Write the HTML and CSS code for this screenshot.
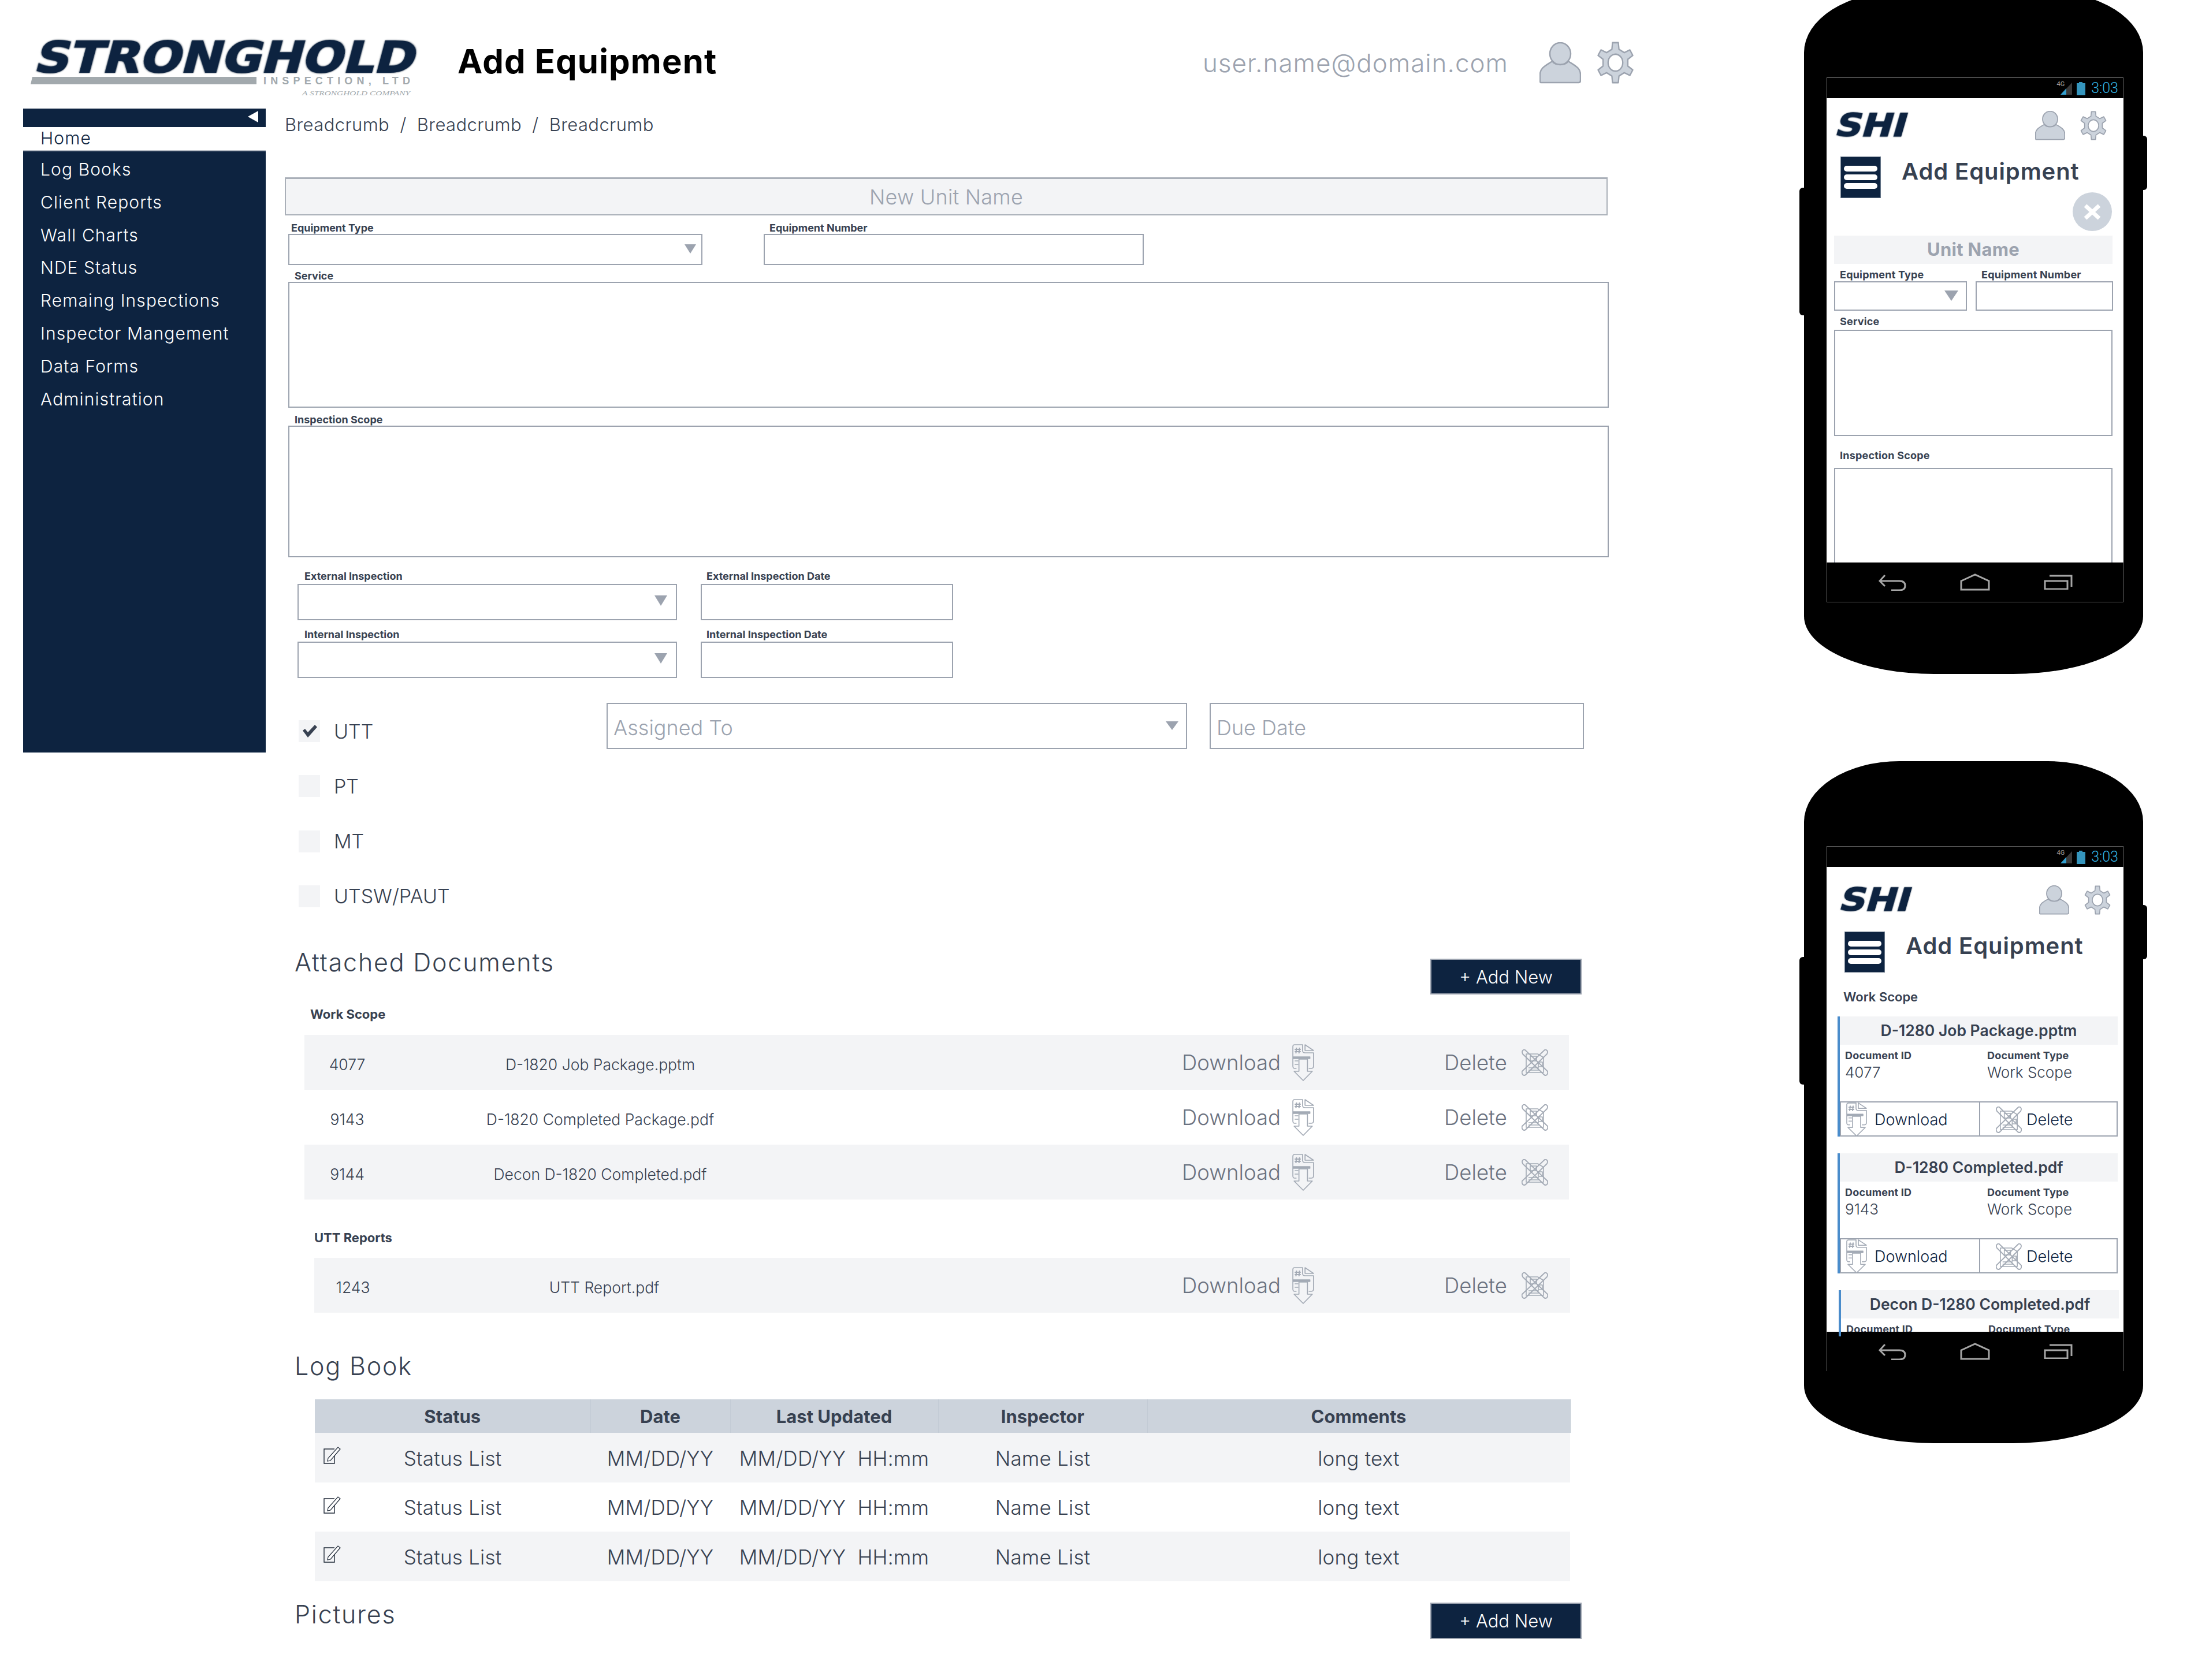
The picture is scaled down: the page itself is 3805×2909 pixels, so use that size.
FILE: index.html
```html
<!DOCTYPE html>
<html lang="en">
<head>
<meta charset="utf-8">
<title>Add Equipment</title>
<link rel="stylesheet" href="styles.css">
</head>
<body>
<svg class="defs" aria-hidden="true">
  <symbol id="i-user" viewBox="0 0 72 72" preserveAspectRatio="none">
    <ellipse cx="36" cy="20" rx="18" ry="19" fill="#ccd3dc" stroke="#9ca3af" stroke-width="2.5"/>
    <path d="M2 70 Q1 70 1 66 V56 C1 44 12 40 22 33 C28 41 44 41 50 33 C60 40 71 44 71 56 V66 Q71 70 68 70 Z" fill="#ccd3dc" stroke="#9ca3af" stroke-width="2.5"/>
  </symbol>
  <symbol id="i-gear" viewBox="0 0 100 100" preserveAspectRatio="none">
    <path fill-rule="evenodd" fill="#ccd3dc" stroke="#9ca3af" stroke-width="3.5" stroke-linejoin="round" d="M40.9 18.3L42.5 2.6H57.5L59.1 18.3L72.9 26.3L87.3 19.8L94.8 32.8L82 42V58L94.8 67.2L87.3 80.2L72.9 73.7L59.1 81.7L57.5 97.4H42.5L40.9 81.7L27.1 73.7L12.7 80.2L5.2 67.2L18 58V42L5.2 32.8L12.7 19.8L27.1 26.3Z"/>
    <ellipse cx="50" cy="50" rx="19" ry="20" fill="#fff" stroke="#9ca3af" stroke-width="3.5"/>
  </symbol>
  <symbol id="i-download" viewBox="0 0 38 64" preserveAspectRatio="none">
    <g fill="none" stroke="#a3aab5" stroke-width="1.6" stroke-linejoin="round">
      <path d="M8 42H5Q2 42 2 38V4Q2 1 5 1H18V11Q18 15 22 15H36V38Q36 42 32 42H28"/>
      <path d="M22 1L36 11H22Z"/>
      <path d="M3 22H30V25H3Z" fill="#a3aab5"/>
      <path d="M5 29H11M5 35H11"/>
      <path d="M12 26H26V47H34L19 63L4 47H12Z"/>
      <path d="M8 6L7 16M13 6L12 16M5 9H15M5 13H15" stroke-width="2"/>
    </g>
  </symbol>
  <symbol id="i-delete" viewBox="0 0 46 46" preserveAspectRatio="none">
    <g fill="none" stroke="#a3aab5" stroke-width="1.6" stroke-linejoin="round">
      <path d="M8 8H28L38 14V40H8Z"/>
      <path d="M15 12H26V20H15ZM29 22H36V30H29ZM12 32H30M12 36H30"/>
      <path d="M6 1L45 38Q46 41 44 44Q41 46 39 44L2 8Q0 4 2 2Q4 0 6 1Z" stroke-width="1.8"/>
      <path d="M40 1L1 38Q0 41 2 44Q5 46 7 44L44 8Q46 4 44 2Q42 0 40 1Z" stroke-width="1.8"/>
    </g>
  </symbol>
  <symbol id="i-edit" viewBox="0 0 30 30">
    <path d="M19 4H1V29H19V15" fill="none" stroke="#1f2937" stroke-width="1.4"/>
    <path d="M25 1L29 4L12 24L7 25L8 20Z" fill="#fff" stroke="#1f2937" stroke-width="1.2"/>
  </symbol>
  <symbol id="i-back" viewBox="0 0 48 28">
    <path d="M11 1L2 11L11 20M2 11H36Q46 11 46 19T36 27H22" fill="none" stroke="#a6a6a6" stroke-width="3"/>
  </symbol>
  <symbol id="i-home" viewBox="0 0 52 30">
    <path d="M2 13L26 2L50 13V28H2Z" fill="none" stroke="#a6a6a6" stroke-width="3"/>
  </symbol>
  <symbol id="i-recent" viewBox="0 0 50 26">
    <path d="M2 11H41V25H2Z" fill="none" stroke="#a6a6a6" stroke-width="3"/>
    <path d="M10 2H48V21" fill="none" stroke="#a6a6a6" stroke-width="3"/>
  </symbol>
  <symbol id="i-status" viewBox="0 0 50 24">
    <path d="M6 23L26 2V23Z" fill="#3a3a3a"/>
    <path d="M6 23L16 12V23Z" fill="#33a0d0"/>
    <path d="M34 3H38V1H44V3H49V24H34Z" fill="#3595bd"/>
  </symbol>
</svg>

<div class="board">
  <div class="desktop">
    <header class="top">
      <svg class="logo" viewBox="0 0 672 96" role="img" aria-label="Stronghold Inspection, LTD">
        <text class="logo-main" x="19" y="55" textLength="658" lengthAdjust="spacingAndGlyphs" transform="skewX(-15)">STRONGHOLD</text>
        <path class="logo-bar" d="M3 63H391V76H0Z"/>
        <text class="logo-sub" x="403" y="76" textLength="254">INSPECTION, LTD</text>
        <text class="logo-tag" x="470" y="95" textLength="187" lengthAdjust="spacingAndGlyphs">A STRONGHOLD COMPANY</text>
      </svg>
      <h1 class="page-title">Add Equipment</h1>
      <span class="user-mail">user.name@domain.com</span>
      <svg class="ico-user"><use href="#i-user"/></svg>
      <svg class="ico-gear"><use href="#i-gear"/></svg>
    </header>

    <div class="layout">
      <nav class="side">
        <div class="side-top"><span class="side-arrow"></span></div>
        <a class="side-home">Home</a>
        <a class="side-link">Log Books</a>
        <a class="side-link">Client Reports</a>
        <a class="side-link">Wall Charts</a>
        <a class="side-link">NDE Status</a>
        <a class="side-link">Remaing Inspections</a>
        <a class="side-link">Inspector Mangement</a>
        <a class="side-link">Data Forms</a>
        <a class="side-link">Administration</a>
      </nav>

      <main class="content">
        <div class="crumbs">Breadcrumb&nbsp; / &nbsp;Breadcrumb&nbsp; / &nbsp;Breadcrumb</div>
        <div class="unit-bar">New Unit Name</div>

        <div class="row row-1">
          <div class="field f-type"><label class="lbl lbl-a">Equipment Type</label><div class="box select h54"></div></div>
          <div class="field f-num"><label class="lbl lbl-b">Equipment Number</label><div class="box h54"></div></div>
        </div>

        <div class="wide wide-service">
          <label class="lbl lbl-w">Service</label>
          <div class="box h218"></div>
        </div>
        <div class="wide wide-scope">
          <label class="lbl lbl-w">Inspection Scope</label>
          <div class="box h228"></div>
        </div>

        <div class="row row-ext">
          <div class="field f-insp"><label class="lbl lbl-w">External Inspection</label><div class="box select h63"></div></div>
          <div class="field f-date"><label class="lbl lbl-b">External Inspection Date</label><div class="box h63"></div></div>
        </div>
        <div class="row row-int">
          <div class="field f-insp"><label class="lbl lbl-w">Internal Inspection</label><div class="box select h63"></div></div>
          <div class="field f-date"><label class="lbl lbl-b">Internal Inspection Date</label><div class="box h63"></div></div>
        </div>

        <div class="assign">
          <ul class="checks">
            <li class="check"><span class="cb"><svg class="tick" viewBox="0 0 28 24"><path d="M2 11L6 8L11 14L23 1L27 5L11 23Z"/></svg></span>UTT</li>
            <li class="check"><span class="cb"></span>PT</li>
            <li class="check"><span class="cb"></span>MT</li>
            <li class="check"><span class="cb"></span>UTSW/PAUT</li>
          </ul>
          <div class="box select h80 ph ph-assigned">Assigned To</div>
          <div class="box h80 ph ph-due">Due Date</div>
        </div>

        <div class="sec-head sec-docs">
          <h2 class="sec-title">Attached Documents</h2>
          <button class="add-btn">+ Add New</button>
        </div>

        <div class="group-lbl gl-work">Work Scope</div>
        <div class="docs">
          <div class="doc alt"><span class="doc-id">4077</span><span class="doc-name">D-1820 Job Package.pptm</span><span class="act act-dl">Download<svg class="ico-dl"><use href="#i-download"/></svg></span><span class="act act-del">Delete<svg class="ico-del"><use href="#i-delete"/></svg></span></div>
          <div class="doc"><span class="doc-id">9143</span><span class="doc-name">D-1820 Completed Package.pdf</span><span class="act act-dl">Download<svg class="ico-dl"><use href="#i-download"/></svg></span><span class="act act-del">Delete<svg class="ico-del"><use href="#i-delete"/></svg></span></div>
          <div class="doc alt"><span class="doc-id">9144</span><span class="doc-name">Decon D-1820 Completed.pdf</span><span class="act act-dl">Download<svg class="ico-dl"><use href="#i-download"/></svg></span><span class="act act-del">Delete<svg class="ico-del"><use href="#i-delete"/></svg></span></div>
        </div>

        <div class="group-lbl gl-utt">UTT Reports</div>
        <div class="docs docs-utt">
          <div class="doc doc-utt alt"><span class="doc-id">1243</span><span class="doc-name">UTT Report.pdf</span><span class="act act-dl">Download<svg class="ico-dl"><use href="#i-download"/></svg></span><span class="act act-del">Delete<svg class="ico-del"><use href="#i-delete"/></svg></span></div>
        </div>

        <h2 class="sec-title sec-log">Log Book</h2>
        <table class="log">
          <colgroup><col class="c-status"><col class="c-date"><col class="c-upd"><col class="c-insp"><col class="c-com"></colgroup>
          <thead><tr><th>Status</th><th>Date</th><th>Last Updated</th><th>Inspector</th><th>Comments</th></tr></thead>
          <tbody>
            <tr class="alt"><td class="st"><svg class="ico-edit"><use href="#i-edit"/></svg>Status List</td><td>MM/DD/YY</td><td>MM/DD/YY&nbsp; HH:mm</td><td>Name List</td><td>long text</td></tr>
            <tr><td class="st"><svg class="ico-edit"><use href="#i-edit"/></svg>Status List</td><td>MM/DD/YY</td><td>MM/DD/YY&nbsp; HH:mm</td><td>Name List</td><td>long text</td></tr>
            <tr class="alt"><td class="st"><svg class="ico-edit"><use href="#i-edit"/></svg>Status List</td><td>MM/DD/YY</td><td>MM/DD/YY&nbsp; HH:mm</td><td>Name List</td><td>long text</td></tr>
          </tbody>
        </table>

        <div class="sec-head sec-pics">
          <h2 class="sec-title">Pictures</h2>
          <button class="add-btn">+ Add New</button>
        </div>
      </main>
    </div>
  </div>

  <div class="phones">
    <section class="phone phone-a">
      <span class="key key-r"></span><span class="key key-l"></span>
      <div class="screen">
        <div class="status"><span class="tiny">4G</span><svg class="st-icons"><use href="#i-status"/></svg><span class="clock">3:03</span></div>
        <div class="view">
          <div class="m-top">
            <svg class="shi" viewBox="0 0 132 46" role="img" aria-label="SHI"><text x="13" y="44" textLength="122" lengthAdjust="spacingAndGlyphs" transform="skewX(-16)">SHI</text></svg>
            <svg class="m-user"><use href="#i-user"/></svg>
            <svg class="m-gear"><use href="#i-gear"/></svg>
          </div>
          <div class="m-title"><span class="burger"><i></i><i></i><i></i></span><h2 class="m-h">Add Equipment</h2></div>
          <span class="m-close"><svg viewBox="0 0 30 34" class="m-x"><path d="M3 6L27 28M27 6L3 28"/></svg></span>
          <div class="m-unit">Unit Name</div>
          <div class="m-two">
            <div class="field"><label class="m-lbl m-lbl-1">Equipment Type</label><div class="box select h51 arrow-big"></div></div>
            <div class="field"><label class="m-lbl m-lbl-1">Equipment Number</label><div class="box h51"></div></div>
          </div>
          <label class="m-lbl m-lbl-s">Service</label>
          <div class="box m-area h184"></div>
          <label class="m-lbl m-lbl-i">Inspection Scope</label>
          <div class="box m-area h200"></div>
        </div>
        <div class="softkeys"><svg class="k-back"><use href="#i-back"/></svg><svg class="k-home"><use href="#i-home"/></svg><svg class="k-recent"><use href="#i-recent"/></svg></div>
      </div>
    </section>

    <section class="phone phone-b">
      <span class="key key-r"></span><span class="key key-l"></span>
      <div class="screen screen-b">
        <div class="status"><span class="tiny">4G</span><svg class="st-icons"><use href="#i-status"/></svg><span class="clock">3:03</span></div>
        <div class="view view-b">
          <div class="m-top">
            <svg class="shi" viewBox="0 0 132 46" role="img" aria-label="SHI"><text x="13" y="44" textLength="122" lengthAdjust="spacingAndGlyphs" transform="skewX(-16)">SHI</text></svg>
            <svg class="m-user"><use href="#i-user"/></svg>
            <svg class="m-gear"><use href="#i-gear"/></svg>
          </div>
          <div class="m-title"><span class="burger"><i></i><i></i><i></i></span><h2 class="m-h">Add Equipment</h2></div>
          <div class="m-group">Work Scope</div>

          <article class="card">
            <h3 class="card-h">D-1280 Job Package.pptm</h3>
            <div class="card-grid"><b>Document ID</b><b>Document Type</b><span>4077</span><span>Work Scope</span></div>
            <div class="card-acts"><span class="cact"><svg class="c-dl"><use href="#i-download"/></svg>Download</span><span class="cact cact-del"><svg class="c-del"><use href="#i-delete"/></svg>Delete</span></div>
          </article>
          <article class="card">
            <h3 class="card-h">D-1280 Completed.pdf</h3>
            <div class="card-grid"><b>Document ID</b><b>Document Type</b><span>9143</span><span>Work Scope</span></div>
            <div class="card-acts"><span class="cact"><svg class="c-dl"><use href="#i-download"/></svg>Download</span><span class="cact cact-del"><svg class="c-del"><use href="#i-delete"/></svg>Delete</span></div>
          </article>
          <article class="card card-last">
            <h3 class="card-h">Decon D-1280 Completed.pdf</h3>
            <div class="card-grid"><b>Document ID</b><b>Document Type</b></div>
          </article>
        </div>
        <div class="softkeys softkeys-b"><svg class="k-back"><use href="#i-back"/></svg><svg class="k-home"><use href="#i-home"/></svg><svg class="k-recent"><use href="#i-recent"/></svg></div>
      </div>
    </section>
  </div>
</div>
</body>
</html>
```

FILE: styles.css
```css
* { box-sizing: border-box; }
html, body { margin: 0; padding: 0; background: #fff; }
body { font-family: Inter, "Open Sans", sans-serif; font-weight: 300; color: #374151; }
h1, h2, h3, ul { margin: 0; padding: 0; }
.defs { position: absolute; width: 0; height: 0; }
.board { display: flex; width: 3805px; height: 2909px; overflow: hidden; }
.desktop { width: 3123px; flex: none; }

/* header */
.top { display: flex; align-items: flex-start; height: 188px; padding: 70px 293px 0 53px; }
.logo { width: 672px; height: 96px; flex: none; overflow: visible; }
.logo-main { font: 700 74px "DejaVu Sans", sans-serif; fill: #0d2340; stroke: #0d2340; stroke-width: 2px; filter: drop-shadow(0 0 1px #8f979f) drop-shadow(0 0 1px #8f979f); }
.logo-bar { fill: #a2a9ad; }
.logo-sub { font: 700 18px "Liberation Sans", sans-serif; fill: #a2a9ad; }
.logo-tag { font: italic 400 11px "Liberation Serif", serif; fill: #a2a9ad; }
.page-title { margin: 6px 0 0 67px; font-size: 58px; line-height: 60px; font-weight: 700; letter-spacing: 1.2px; color: #000; white-space: nowrap; }
.user-mail { margin: 9px 0 0 auto; font-size: 44px; line-height: 60px; letter-spacing: 1px; color: #9ca3af; }
.ico-user { width: 72px; height: 72px; margin: 3px 0 0 54px; flex: none; }
.ico-gear { width: 67px; height: 73px; margin: 2px 0 0 26px; flex: none; }

/* layout + sidebar */
.layout { display: flex; align-items: flex-start; padding-left: 40px; }
.side { width: 420px; height: 1115px; background: #0d2340; flex: none; display: flex; flex-direction: column; color: #fff; }
.side-top { height: 32px; display: flex; justify-content: flex-end; padding: 4px 13px 0 0; }
.side-arrow { width: 0; height: 0; border-style: solid; border-width: 10px 18px 10px 0; border-color: transparent #fff transparent transparent; }
.side-home { height: 42px; line-height: 38px; padding-left: 30px; background: #fff; color: #0d2340; border-bottom: 2px solid #b8bec7; font-size: 30px; letter-spacing: 1.1px; margin-bottom: 3px; }
.side-link { height: 56.8px; line-height: 56px; padding-left: 30px; font-size: 30px; letter-spacing: 1.1px; white-space: nowrap; }

/* form */
.content { margin-left: 33px; width: 2300px; flex: none; }
.crumbs { height: 119px; padding-top: 8px; line-height: 40px; font-size: 31px; letter-spacing: .4px; white-space: nowrap; }
.unit-bar { width: 2290px; height: 66px; background: #f3f4f6; border: 2px solid #a9afb8; border-top-width: 3px; line-height: 63px; text-align: center; font-size: 36px; letter-spacing: .2px; color: #9ca3af; }
.field { display: flex; flex-direction: column; }
.row { display: flex; }
.box { border: 2px solid #9ca3af; background: #fff; }
.select { position: relative; }
.select::after { content: ""; position: absolute; right: 9px; top: 16px; border-style: solid; border-width: 16px 10px 0; border-color: #9ca3af transparent transparent; }
.f-insp .select::after { right: 15px; top: 18px; border-width: 18px 11px 0; }
.lbl { display: block; height: 21px; line-height: 22px; font-size: 18px; font-weight: 700; color: #374151; white-space: nowrap; }
.lbl-a { padding-left: 5px; }
.lbl-b { padding-left: 10px; }
.lbl-w { padding-left: 11px; }
.h54 { height: 54px; }
.h63 { height: 63px; }
.h80 { height: 80px; }
.h218 { height: 218px; }
.h228 { height: 228px; }
.h51 { height: 51px; }
.h184 { height: 184px; }
.h200 { height: 200px; }
.row-1 { margin: 11px 0 0 6px; }
.f-type { width: 717px; }
.f-num { width: 658px; margin-left: 106px; }
.wide { margin-left: 6px; width: 2286px; }
.wide-service { margin-top: 8px; }
.wide-scope { margin-top: 10px; }
.row-ext { margin: 22px 0 0 22px; }
.row-int { margin: 14px 0 0 22px; }
.row-ext .lbl { height: 24px; }
.row-int .lbl { height: 23px; }
.row-ext .lbl-w, .row-int .lbl-w { padding-left: 12px; }
.f-insp { width: 657px; }
.f-date { width: 437px; margin-left: 41px; }
.assign { display: flex; align-items: flex-start; margin-top: 43px; height: 353px; }
.checks { list-style: none; width: 533px; margin: 30px 0 0 24px; flex: none; }
.check { display: flex; align-items: center; height: 38px; margin-bottom: 57.3px; font-size: 34px; }
.cb { width: 37px; height: 38px; background: #f3f4f6; margin-right: 24px; display: flex; align-items: center; justify-content: center; flex: none; }
.tick { width: 28px; height: 24px; fill: #374151; }
.ph { font-size: 36px; line-height: 82px; padding-left: 10px; color: #9ca3af; }
.ph-assigned { width: 1005px; }
.ph-assigned::after { right: 13px; top: 30px; border-width: 15px 11px 0; }
.ph-due { width: 648px; margin-left: 39px; }
.sec-head { display: flex; justify-content: space-between; align-items: flex-start; width: 2245px; }
.sec-docs { margin-top: 69px; height: 83px; }
.sec-title { font-size: 43px; line-height: 54px; font-weight: 300; letter-spacing: 1.8px; margin-left: 17px; white-space: nowrap; }
.add-btn { width: 262px; height: 62px; margin-top: 21px; background: #0d2340; border: 2px solid #9ca3af; color: #fff; font: 300 31px Inter, sans-serif; padding: 0; }
.sec-pics { margin-top: 30px; }
.sec-pics .add-btn { margin-top: 7px; height: 63px; }
.group-lbl { font-size: 22px; line-height: 28px; font-weight: 700; white-space: nowrap; }
.gl-work { margin: 20px 0 0 44px; }
.gl-utt { margin: 52px 0 0 51px; }
.docs { width: 2189px; margin: 22px 0 0 34px; }
.docs-utt { width: 2174px; margin: 21px 0 0 51px; }
.doc { display: grid; grid-template-columns: 148px 728px 1097px 1fr; height: 95px; align-items: center; font-size: 26.5px; }
.doc-utt { grid-template-columns: 134px 736px 1086px 1fr; }
.act-dl { padding-left: 643px; }
.doc-utt .act-dl { padding-left: 632px; }
.alt { background: #f3f4f6; }
.doc-id, .doc-name { text-align: center; white-space: nowrap; padding-top: 7px; }
.act { display: flex; align-items: center; font-size: 36.5px; color: #6b7280; white-space: nowrap; }
.ico-dl { width: 40px; height: 64px; margin-left: 19px; flex: none; }
.ico-del { width: 46px; height: 46px; margin-left: 25px; flex: none; }
.sec-log { margin-top: 65px; }
.log { table-layout: fixed; border-collapse: collapse; width: 2173px; margin: 31px 0 0 52px; }
.c-status { width: 477px; } .c-date { width: 242px; } .c-upd { width: 360px; } .c-insp { width: 362px; } .c-com { width: 732px; }
.log th { height: 58px; background: #ccd3dc; font-size: 31px; font-weight: 700; padding: 0; border-right: 1px solid #c3cbd5; }
.log td { height: 85.6px; padding: 2px 0 0; text-align: center; font-size: 35px; letter-spacing: .2px; white-space: nowrap; }
.st { position: relative; }
.ico-edit { position: absolute; left: 15px; top: 24px; width: 30px; height: 30px; }

/* phones */
.phones { display: flex; flex-direction: column; gap: 151px; margin-top: -14px; width: 595px; flex: none; }
.phone { position: relative; width: 587px; height: 1181px; flex: none; padding: 148px 0 0 39px; background: #000; border-radius: 165px 165px 225px 225px / 105px 105px 100px 100px; }
.phone-b { padding-top: 147px; }
.key { position: absolute; background: #000; }
.key-r { left: 587px; top: 249px; width: 7px; height: 94px; border-radius: 0 6px 6px 0; }
.key-l { left: -8px; top: 339px; width: 8px; height: 221px; border-radius: 6px 0 0 6px; }
.screen { width: 514px; height: 909px; border: 1px solid #6b6b6b; display: flex; flex-direction: column; }
.screen-b { border-bottom: 0; }
.status { height: 35px; display: flex; align-items: center; justify-content: flex-end; padding-right: 8px; flex: none; color: #33b5e5; }
.tiny { font: 400 11px Roboto, sans-serif; color: #a8a8a8; margin: -14px -13px 0 0; }
.st-icons { width: 50px; height: 24px; margin-right: 9px; }
.clock { font: 300 25px Roboto, sans-serif; }
.view { height: 804px; background: #fff; overflow: hidden; flex: none; margin: 0 -1px; display: flex; flex-direction: column; }
.view-b { height: 805px; }
.m-top { display: flex; align-items: flex-start; margin-top: 22px; padding: 0 28px 0 12px; height: 52px; flex: none; }
.view-b .m-top { margin-top: 32px; padding: 0 21px 0 19px; }
.shi { width: 132px; height: 46px; flex: none; overflow: visible; }
.shi text { font: 700 54px "DejaVu Sans", sans-serif; fill: #0d2340; stroke: #0d2340; stroke-width: 1.5px; filter: drop-shadow(0 0 1px #8f979f); }
.m-user { width: 52px; height: 51px; margin-left: auto; flex: none; }
.m-gear { width: 48px; height: 51px; margin-left: 25px; flex: none; }
.m-title { display: flex; align-items: flex-start; margin: 27px 0 0 24px; flex: none; }
.view-b .m-title { margin: 28px 0 0 31px; }
.burger { width: 70px; height: 72px; background: #0d2340; border: 1px solid #6b7a8c; display: flex; flex-direction: column; justify-content: center; gap: 5px; padding: 0 5px; flex: none; }
.view-b .burger { height: 71px; }
.burger i { display: block; height: 10px; background: #fff; border-radius: 5px; }
.m-h { margin: 1px 0 0 36px; font-size: 40px; line-height: 50px; font-weight: 600; letter-spacing: .9px; white-space: nowrap; }
.view-b .m-h { margin-top: 0; }
.m-close { width: 68px; height: 67px; border-radius: 50%; background: #ccd3dc; margin: -10px 20px 0 auto; display: flex; align-items: center; justify-content: center; flex: none; }
.m-x { width: 30px; height: 34px; fill: none; stroke: #fff; stroke-width: 7; }
.m-unit { width: 482px; height: 49px; margin: 8px 0 0 13px; background: #f3f4f6; text-align: center; line-height: 48px; font-size: 31px; font-weight: 700; letter-spacing: .3px; color: #9ca3af; flex: none; }
.m-two { display: grid; grid-template-columns: 230px 238px; gap: 15px; margin: 8px 0 0 13px; flex: none; }
.m-lbl { display: block; font-size: 18px; line-height: 22px; font-weight: 700; letter-spacing: .2px; color: #374151; padding-left: 10px; white-space: nowrap; flex: none; }
.m-lbl-s { margin: 8px 0 0 13px; height: 25px; }
.m-lbl-i { margin: 23px 0 0 13px; height: 32px; }
.arrow-big::after { right: 13px; top: 14px; border-width: 18px 12px 0; }
.m-area { width: 482px; margin-left: 13px; flex: none; }
.softkeys { flex: 1; display: flex; align-items: flex-start; padding-top: 21px; background: #000; position: relative; }
.softkeys-b::before { content: ""; position: absolute; left: 20px; top: 0; width: 4px; height: 8px; background: #4a8ccb; }
.k-back { width: 48px; height: 28px; margin-left: 89px; flex: none; }
.k-home { width: 52px; height: 30px; margin: -2px 0 0 93px; flex: none; }
.k-recent { width: 50px; height: 26px; margin-left: 93px; flex: none; }
.m-group { margin: 28px 0 0 29px; font-size: 22px; line-height: 28px; font-weight: 600; flex: none; }
.card { width: 485px; height: 208px; margin: 20px 0 9px 19px; border-left: 4px solid #4a8ccb; flex: none; }
.card-last { margin-left: 21px; height: 82px; }
.card-h { height: 49px; background: #f3f4f6; text-align: center; line-height: 48px; font-size: 26.5px; font-weight: 600; white-space: nowrap; }
.card-grid { display: grid; grid-template-columns: 246px 1fr; grid-template-rows: 22px 36px; padding: 8px 0 0 9px; height: 98px; }
.card-grid b { font-size: 18px; line-height: 22px; font-weight: 700; letter-spacing: .2px; white-space: nowrap; }
.card-grid span { font-size: 26px; line-height: 36px; }
.card-acts { display: grid; grid-template-columns: 239px 242px; height: 61px; border: 2px solid #9ca3af; }
.cact { display: flex; align-items: center; font-size: 27px; color: #0d2340; padding-left: 8px; white-space: nowrap; }
.cact-del { border-left: 2px solid #9ca3af; padding-left: 27px; }
.c-dl { width: 38px; height: 59px; margin-right: 12px; flex: none; }
.c-del { width: 45px; height: 46px; margin-right: 8px; flex: none; }
```
